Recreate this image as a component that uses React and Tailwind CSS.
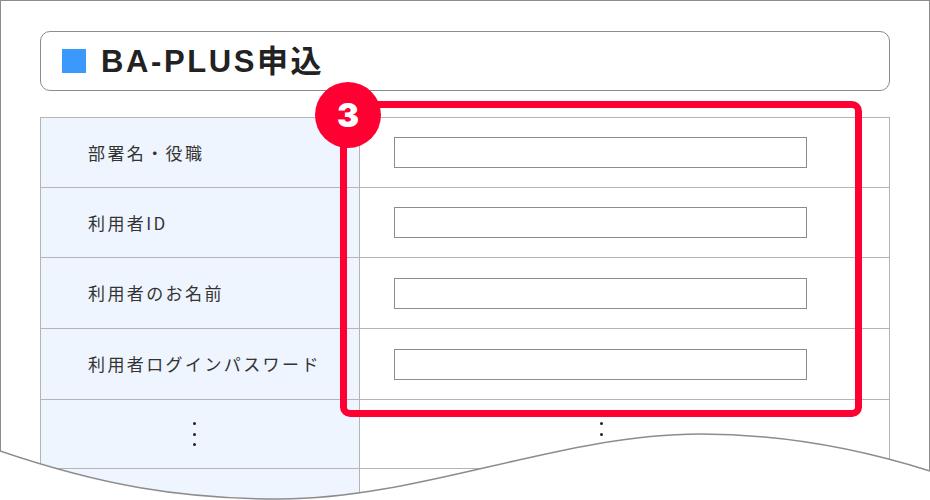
import React from 'react'

const RED = '#ff0033'

const rows = [
  { label: '部署名・役職', h: 'h-[70px]' },
  { label: '利用者ID', h: 'h-[70px]' },
  { label: '利用者のお名前', h: 'h-[71px]' },
  { label: '利用者ログインパスワード', h: 'h-[71px]' },
]

function Dots({ count }) {
  return (
    <div className="flex flex-col gap-[7.5px]">
      {Array.from({ length: count }).map((_, i) => (
        <span key={i} className="block w-[3px] h-[3px] rounded-full bg-[#222]" />
      ))}
    </div>
  )
}

export default function App() {
  return (
    <div className="relative w-[930px] h-[500px] overflow-hidden bg-white font-['Noto_Sans_CJK_JP',sans-serif]">
      <div className="h-full border-x border-t border-[#8c8c8c] px-[39px] pt-[30px]">
        {/* Title */}
        <div className="h-[60px] flex items-center pl-[21px] border border-[#8c8c8c] rounded-[10px]">
          <span className="block w-[24px] h-[24px] bg-[#3b99fc]" />
          <h1 className="ml-[15px] text-[31px] leading-none font-bold tracking-[2.6px] text-[#222] font-['Liberation_Sans','Noto_Sans_CJK_JP',sans-serif]">
            BA-PLUS申込
          </h1>
        </div>

        {/* Form table */}
        <div className="mt-[26px] border-x border-t border-[#b4b4b4]">
          {rows.map(row => (
            <div key={row.label} className={`grid grid-cols-[319px_1fr] ${row.h}`}>
              <div className="bg-[#eef5fe] border-r border-b border-[#b4b4b4] flex items-center pl-[47px] text-[17px] tracking-[2.4px] text-[#333]">
                {row.label}
              </div>
              <div className="border-b border-[#b4b4b4] flex items-center pl-[34px]">
                <input type="text" className="w-[413px] h-[31px] border border-[#8c8c8c] bg-white outline-none" />
              </div>
            </div>
          ))}
          <div className="grid grid-cols-[319px_1fr] h-[69px]">
            <div className="bg-[#eef5fe] border-r border-b border-[#b4b4b4] flex items-center pl-[152px]">
              <Dots count={3} />
            </div>
            <div className="border-b border-[#b4b4b4] flex items-center pl-[240px]">
              <Dots count={3} />
            </div>
          </div>
          <div className="grid grid-cols-[319px_1fr] h-[70px]">
            <div className="bg-[#eef5fe] border-r border-[#b4b4b4]" />
            <div />
          </div>
        </div>
      </div>

      {/* torn edge */}
      <svg className="absolute left-0 top-0" width="930" height="500" viewBox="0 0 930 500">
        <path
          d="M0 451 C100 485 180 499 280 499 C420 499 560 434 700 434 C790 434 870 452 930 471 L930 500 L0 500 Z"
          fill="#fff"
        />
        <path
          d="M0 451 C100 485 180 499 280 499 C420 499 560 434 700 434 C790 434 870 452 930 471"
          fill="none"
          stroke="#8c8c8c"
          strokeWidth="1.5"
        />
      </svg>

      {/* annotation */}
      <div className="absolute left-[340px] top-[101px] w-[522px] h-[316px] border-[7px] rounded-[10px]" style={{ borderColor: RED }} />
      <div className="absolute left-[315px] top-[82px] w-[66px] h-[66px] rounded-full flex items-center justify-center text-white text-[33px] font-black leading-none font-['Inter',sans-serif]" style={{ backgroundColor: RED }}>
        3
      </div>
    </div>
  )
}
